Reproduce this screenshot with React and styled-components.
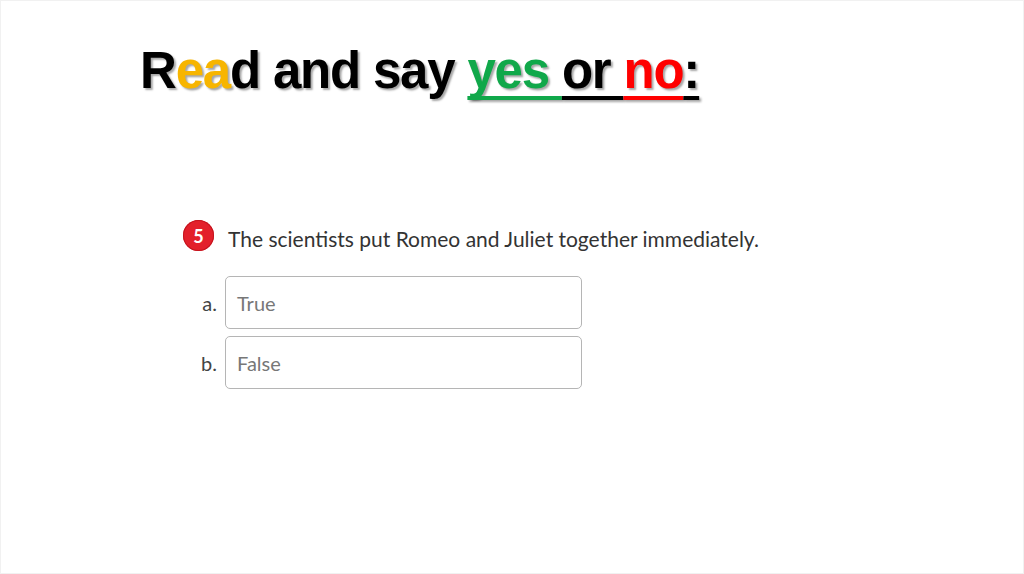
import styled, { createGlobalStyle } from "styled-components";

const GlobalStyle = createGlobalStyle`
  html, body {
    margin: 0;
    padding: 0;
    background: #ffffff;
  }
`;

const Slide = styled.div`
  width: 1024px;
  height: 574px;
  box-sizing: border-box;
  border: 1px solid #f1f1f1;
  background: #fff;
  display: flex;
  flex-direction: column;
  overflow: hidden;
`;

const Title = styled.h1`
  margin: 38px 0 0 139px;
  font-family: "Liberation Sans", Arial, sans-serif;
  font-weight: 700;
  font-size: 51px;
  line-height: 64px;
  letter-spacing: -1.2px;
  color: #000;
  text-shadow: 2px 2px 2px rgba(0, 0, 0, 0.35);
`;

const Part = styled.span`
  color: ${props => props.color || "#000"};
  text-decoration: ${props => (props.underline ? "underline" : "none")};
  text-decoration-thickness: 4px;
  text-underline-offset: 8px;
  text-decoration-skip-ink: none;
`;

const Question = styled.div`
  margin: 122px 0 0 182px;
  display: flex;
  flex-direction: column;
  font-family: Lato, "Open Sans", sans-serif;
`;

const Prompt = styled.div`
  display: flex;
  align-items: center;
  gap: 14px;
  font-size: 21px;
  color: #333;
`;

const Badge = styled.div`
  width: 31px;
  height: 31px;
  border-radius: 50%;
  background: #e3202b;
  box-shadow: inset 0 0 0 1px #c4141e;
  color: #fff;
  font-weight: 700;
  font-size: 18px;
  margin-top: -5px;
  display: flex;
  align-items: center;
  justify-content: center;
`;

const Options = styled.div`
  margin-top: 25px;
  display: flex;
  flex-direction: column;
  gap: 7px;
`;

const Option = styled.div`
  display: flex;
  align-items: center;
  gap: 8px;
`;

const Letter = styled.span`
  width: 34px;
  text-align: right;
  font-size: 20px;
  color: #444;
`;

const Field = styled.div`
  width: 357px;
  height: 53px;
  box-sizing: border-box;
  border: 1px solid #b5b5b5;
  border-radius: 5px;
  padding: 0 11px;
  display: flex;
  align-items: center;
  font-size: 20px;
  color: #777;
`;

export default function App() {
  return (
    <>
      <GlobalStyle />
      <Slide>
        <Title>
          R<Part color="#f7b500">ea</Part>d and say{" "}
          <Part color="#10a84a" underline>yes </Part>
          <Part underline>or </Part>
          <Part color="#ff0000" underline>no</Part>
          <Part underline>:</Part>
        </Title>
        <Question>
          <Prompt>
            <Badge>5</Badge>
            The scientists put Romeo and Juliet together immediately.
          </Prompt>
          <Options>
            <Option>
              <Letter>a.</Letter>
              <Field>True</Field>
            </Option>
            <Option>
              <Letter>b.</Letter>
              <Field>False</Field>
            </Option>
          </Options>
        </Question>
      </Slide>
    </>
  );
}
